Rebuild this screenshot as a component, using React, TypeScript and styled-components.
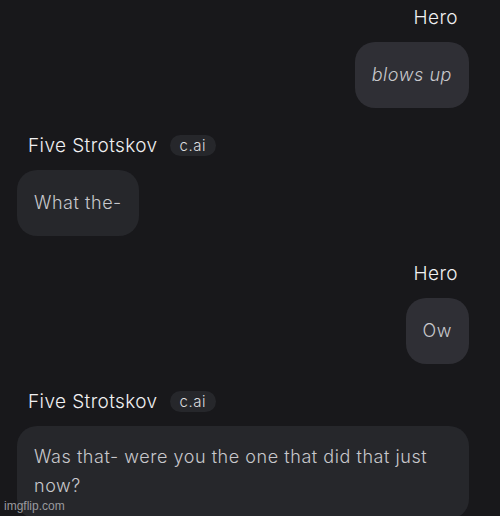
import React from "react";
import styled, { createGlobalStyle } from "styled-components";

const GlobalStyle = createGlobalStyle`
  html, body {
    margin: 0;
    padding: 0;
    background-color: #18181b;
    overflow: hidden;
  }
  body {
    font-family: Inter, "Noto Sans", sans-serif;
  }
`;

const ChatDiv = styled.div`
  position: relative;
  width: 500px;
  height: 516px;
  box-sizing: border-box;
  padding: 6px 31px 0 17px;
  display: flex;
  flex-direction: column;
  gap: 26px;
  overflow: hidden;
`;

const MessageGroup = styled.div<{ $user?: boolean }>`
  display: flex;
  flex-direction: column;
  align-items: ${(p) => (p.$user ? "flex-end" : "flex-start")};
  gap: 14px;
`;

const NameRow = styled.div<{ $user?: boolean }>`
  height: 22px;
  display: flex;
  align-items: center;
  gap: 12px;
  padding: ${(p) => (p.$user ? "0 11px 0 0" : "0 0 0 11px")};
`;

const NameText = styled.span`
  font-size: 19px;
  font-weight: 300;
  color: #f0f0f2;
  letter-spacing: 0.4px;
`;

const Badge = styled.span`
  height: 21px;
  padding: 0 10px;
  border-radius: 11px;
  background-color: #26272b;
  color: #dcdcdf;
  font-size: 15px;
  font-weight: 300;
  letter-spacing: 0.5px;
  display: flex;
  align-items: center;
`;

const Bubble = styled.div<{ $user?: boolean; $italic?: boolean }>`
  box-sizing: border-box;
  min-height: 66px;
  padding: 18px 17px 19px;
  border-radius: 20px;
  background-color: ${(p) => (p.$user ? "#2f2f35" : "#26272b")};
  color: #c8c8cc;
  font-size: 18px;
  font-weight: 300;
  line-height: 29px;
  letter-spacing: 0.55px;
  font-style: ${(p) => (p.$italic ? "italic" : "normal")};
  max-width: 452px;
`;

const WideBubble = styled(Bubble)`
  width: 452px;
  padding-top: 16px;
`;

const Watermark = styled.div`
  position: absolute;
  left: 4px;
  bottom: 3px;
  font-family: "Liberation Sans", Arial, sans-serif;
  font-size: 12px;
  color: #9a9a9e;
`;

const messages = [
  { user: true, name: "Hero", text: "blows up", italic: true },
  { user: false, name: "Five Strotskov", text: "What the-" },
  { user: true, name: "Hero", text: "Ow" },
  {
    user: false,
    name: "Five Strotskov",
    text: "Was that- were you the one that did that just now?",
    wide: true,
  },
];

function App() {
  return (
    <>
      <GlobalStyle />
      <ChatDiv>
        {messages.map((m, idx) => (
          <MessageGroup key={idx} $user={m.user}>
            <NameRow $user={m.user}>
              <NameText>{m.name}</NameText>
              {!m.user && <Badge>c.ai</Badge>}
            </NameRow>
            {m.wide ? (
              <WideBubble>{m.text}</WideBubble>
            ) : (
              <Bubble $user={m.user} $italic={m.italic}>
                {m.text}
              </Bubble>
            )}
          </MessageGroup>
        ))}
        <Watermark>imgflip.com</Watermark>
      </ChatDiv>
    </>
  );
}

export default App;
